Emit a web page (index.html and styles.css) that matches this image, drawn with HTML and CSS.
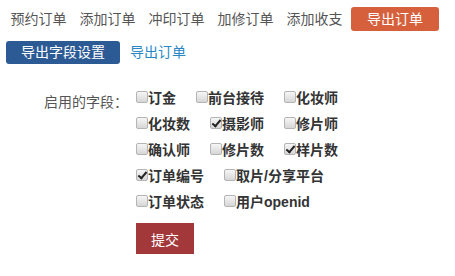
FILE: index.html
```html
<!DOCTYPE html>
<html lang="zh-CN">
<head>
    <meta charset="UTF-8">
    <meta name="viewport" content="width=device-width, initial-scale=1.0">
    <title>导出订单</title>
    <link rel="stylesheet" href="styles.css">
</head>
<body>
    <div class="page">
        <nav class="tabs">
            <a href="#">预约订单</a>
            <a href="#">添加订单</a>
            <a href="#">冲印订单</a>
            <a href="#">加修订单</a>
            <a href="#">添加收支</a>
            <a href="#" class="active">导出订单</a>
        </nav>

        <div class="subnav">
            <a href="#" class="btn-blue">导出字段设置</a>
            <a href="#" class="sub-link">导出订单</a>
        </div>

        <form class="fields-form">
            <div class="field-row">
                <span class="field-label">启用的字段：</span>
                <div class="checks">
                    <label class="check"><input type="checkbox">订金</label>
                    <label class="check"><input type="checkbox">前台接待</label>
                    <label class="check"><input type="checkbox">化妆师</label>
                    <label class="check"><input type="checkbox">化妆数</label>
                    <label class="check"><input type="checkbox" checked>摄影师</label>
                    <label class="check"><input type="checkbox">修片师</label>
                    <label class="check"><input type="checkbox">确认师</label>
                    <label class="check"><input type="checkbox">修片数</label>
                    <label class="check"><input type="checkbox" checked>样片数</label>
                    <label class="check"><input type="checkbox" checked>订单编号</label>
                    <label class="check"><input type="checkbox">取片/分享平台</label>
                    <label class="check"><input type="checkbox">订单状态</label>
                    <label class="check"><input type="checkbox">用户openid</label>
                </div>
            </div>
            <div class="actions">
                <button type="button" class="btn-submit">提交</button>
            </div>
        </form>
    </div>
</body>
</html>
```

FILE: styles.css
```css
body {
    margin: 0;
    background: #fff;
    font-family: "Liberation Sans", "Noto Sans CJK SC", sans-serif;
    font-size: 14px;
    color: #555;
}
a {
    text-decoration: none;
}
.page {
    padding-top: 7px;
}
.tabs {
    display: flex;
    align-items: center;
    height: 24px;
    padding-left: 4px;
}
.tabs a {
    color: #555;
    line-height: 24px;
    padding: 0 6.5px;
}
.tabs a.active {
    margin-left: 2px;
    padding: 0 16px;
    background: #d6603c;
    color: #fff;
    border-radius: 3px;
}
.subnav {
    display: flex;
    align-items: center;
    gap: 10px;
    margin-top: 10px;
    padding-left: 6px;
}
.btn-blue {
    display: block;
    height: 23px;
    line-height: 23px;
    padding: 0 15px;
    background: #2c5a95;
    color: #fff;
    border-radius: 3px;
}
.sub-link {
    color: #2a87c5;
    line-height: 23px;
}
.fields-form {
    margin-top: 20px;
}
.field-row {
    display: grid;
    grid-template-columns: 128px 250px;
    column-gap: 8px;
}
.field-label {
    text-align: right;
    line-height: 26px;
    padding-top: 4px;
    font-family: "Noto Sans CJK SC", sans-serif;
    text-spacing-trim: space-all;
}
.checks {
    display: flex;
    flex-wrap: wrap;
    column-gap: 20px;
}
.check {
    display: inline-flex;
    align-items: center;
    height: 26px;
    font-weight: bold;
    color: #333;
}
.check input {
    appearance: none;
    -webkit-appearance: none;
    position: relative;
    width: 12px;
    height: 12px;
    margin: 0;
    border: 1px solid #b4b4b4;
    border-radius: 2px;
    background: linear-gradient(#f6f6f6, #d6d6d6);
}
.check input:checked::after {
    content: "";
    position: absolute;
    left: 3px;
    top: 0;
    width: 3px;
    height: 7px;
    border-right: 2px solid #222;
    border-bottom: 2px solid #222;
    transform: rotate(40deg);
}
.actions {
    margin-top: 9px;
    padding-left: 136px;
}
.btn-submit {
    height: 31px;
    padding: 0 15px;
    border: none;
    background: #a3383a;
    color: #fff;
    font-family: inherit;
    font-size: 14px;
    cursor: pointer;
}
```
